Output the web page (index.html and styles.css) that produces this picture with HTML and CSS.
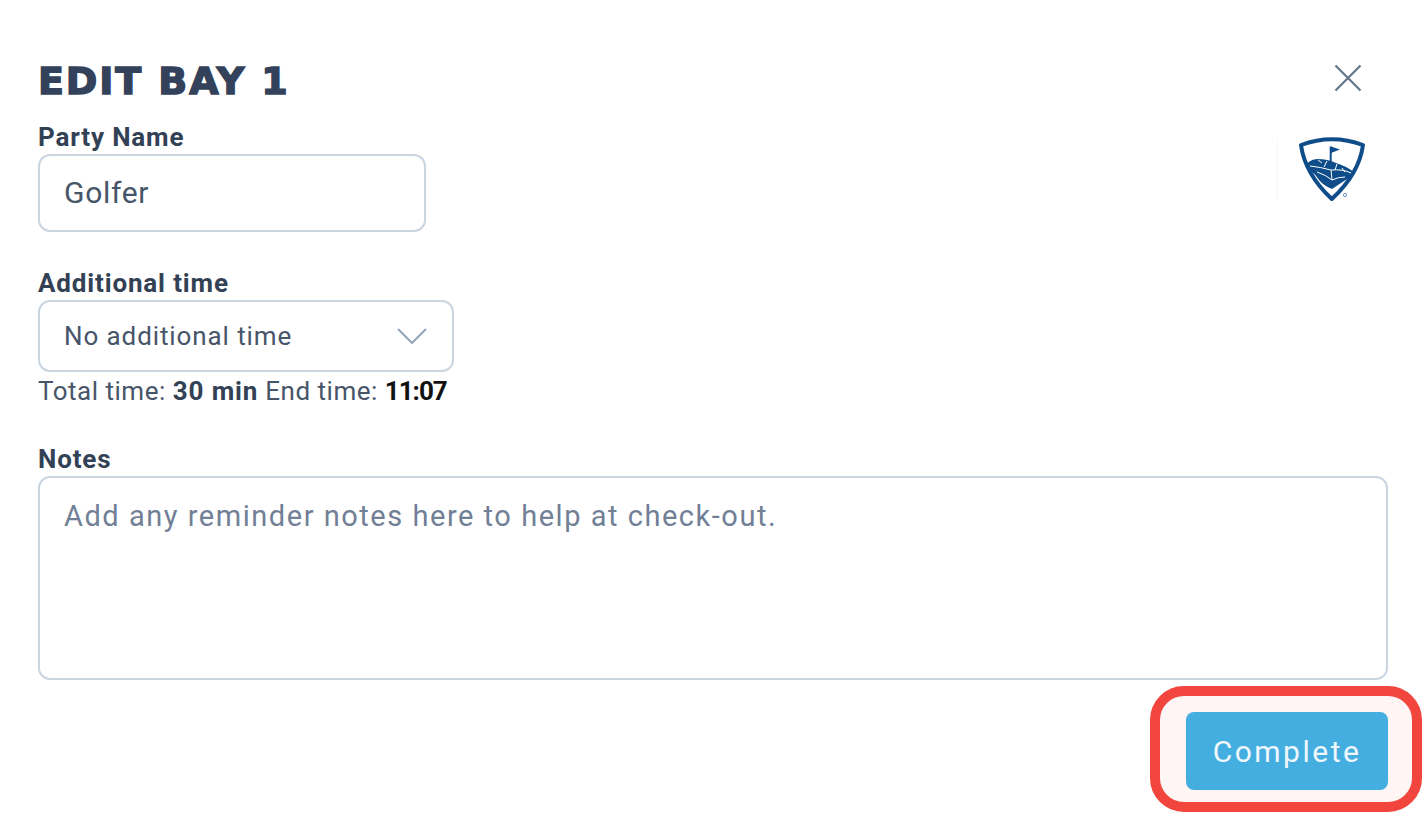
FILE: index.html
```html
<!DOCTYPE html>
<html lang="en">
<head>
<meta charset="utf-8">
<title>Edit Bay 1</title>
<link rel="stylesheet" href="styles.css">
</head>
<body>
<main class="dialog">
  <header class="head">
    <h1 class="title">EDIT BAY 1</h1>
    <svg class="close" viewBox="0 0 28 28" aria-label="Close"><path d="M1.5 1.5 26.5 26.5M26.5 1.5 1.5 26.5"/></svg>
  </header>
  <div class="top">
    <div class="field-party">
      <label class="label">Party Name</label>
      <div class="input">Golfer</div>
    </div>
    <div class="brand">
      <span class="divider"></span>
      <svg class="logo" viewBox="0 0 68 66" aria-label="Topgolf">
        <path class="shield" d="M3 9Q34-2.6 65 9 61 38 33.8 63 7 38 3 9Z"/>
        <path class="blue" d="M8 30Q10 24 19 23 30 23 38 27 48 30 56 36 52 42 46 45 40 49 34 53 26 50 21 44 17 38 15 37 10 34 8 30Z"/>
        <path class="grid" d="M12 30Q22 31 33 34 45 33 53 37M20 24 24 27M29 25 26 31M39 28 37 34M33 34 34 44M44 32 47 36M19 36Q28 39 34 44 40 41 47 41"/>
        <path class="pole" d="M32.7 10.5V27"/>
        <path class="blue" d="M33 10.5 42 13.5 33 17Z"/>
        <circle class="mark" cx="47" cy="59" r="1.6"/>
      </svg>
    </div>
  </div>
  <div class="field-time">
    <label class="label">Additional time</label>
    <div class="select">
      <span>No additional time</span>
      <svg class="chev" viewBox="0 0 30 16"><path d="M1 1 15 15 29 1"/></svg>
    </div>
    <p class="summary">Total time: <b>30 min</b> End time: <b class="end">11:07</b></p>
  </div>
  <div class="field-notes">
    <label class="label">Notes</label>
    <div class="textarea">Add any reminder notes here to help at check-out.</div>
  </div>
  <div class="actions">
    <div class="highlight"></div>
    <button class="complete">Complete</button>
  </div>
</main>
</body>
</html>
```

FILE: styles.css
```css
* { box-sizing: border-box; }
html, body { margin: 0; height: 100%; background: #fff; }
body { font-family: Roboto, "Liberation Sans", sans-serif; color: #334155; overflow: hidden; }
.dialog { width: 1426px; height: 828px; padding: 57px 38px 0; }
.head { display: flex; justify-content: space-between; align-items: flex-start; height: 63px; }
.title { margin: 2px 0 0; font: 700 38px/44px "DejaVu Sans", sans-serif; letter-spacing: 1.9px; color: #33425a; -webkit-text-stroke: 1.5px #33425a; }
.close { width: 28px; height: 28px; margin: 7px 26px 0 0; }
.close path { fill: none; stroke: #64748b; stroke-width: 2.2; }
.top { display: flex; justify-content: space-between; }
.label { display: block; font-size: 26px; line-height: 34px; font-weight: 700; letter-spacing: .85px; color: #334155; }
.input { width: 388px; height: 78px; border: 2px solid #cbd5e1; border-radius: 12px; padding: 0 24px; font-size: 30px; line-height: 74px; letter-spacing: .7px; color: #475569; }
.brand { display: flex; align-items: flex-start; margin-top: 16px; margin-right: 22px; }
.divider { width: 1px; height: 60px; margin: 4px 20px 0 0; background: #f5f6f8; }
.logo { width: 68px; height: 66px; }
.shield { fill: #fff; stroke: #0f4c8a; stroke-width: 4; stroke-linejoin: round; }
.blue { fill: #0f4c8a; }
.grid { fill: none; stroke: #fff; stroke-width: 1; }
.pole { fill: none; stroke: #0f4c8a; stroke-width: 2; }
.mark { fill: none; stroke: #6f93b8; stroke-width: 1; }
.field-time { margin-top: 34px; }
.select { width: 416px; height: 72px; border: 2px solid #cbd5e1; border-radius: 12px; padding: 0 25px 0 24px; display: flex; align-items: center; justify-content: space-between; font-size: 26px; letter-spacing: .9px; color: #475569; }
.chev { width: 30px; height: 16px; }
.chev path { fill: none; stroke: #94a3b8; stroke-width: 2; }
.summary { margin: 0; font-size: 26px; line-height: 38px; letter-spacing: .5px; color: #475569; }
.summary b { color: #334155; letter-spacing: .9px; }
.summary .end { color: #111; letter-spacing: -1px; }
.field-notes { margin-top: 32px; }
.textarea { height: 204px; border: 2px solid #cbd5e1; border-radius: 12px; padding: 20px 24px; font-size: 29px; line-height: 36px; letter-spacing: 1.53px; color: #718096; }
.actions { position: relative; display: flex; justify-content: flex-end; margin-top: 32px; }
.highlight { position: absolute; left: 1112px; top: -26px; width: 272px; height: 126px; border: 10px solid #f1453d; border-radius: 34px; background: #fef5f4; }
.complete { position: relative; width: 202px; height: 78px; border: 0; border-radius: 8px; background: #45aee0; color: #eef8fd; font: 400 30px Roboto, sans-serif; letter-spacing: 2.5px; }
```
